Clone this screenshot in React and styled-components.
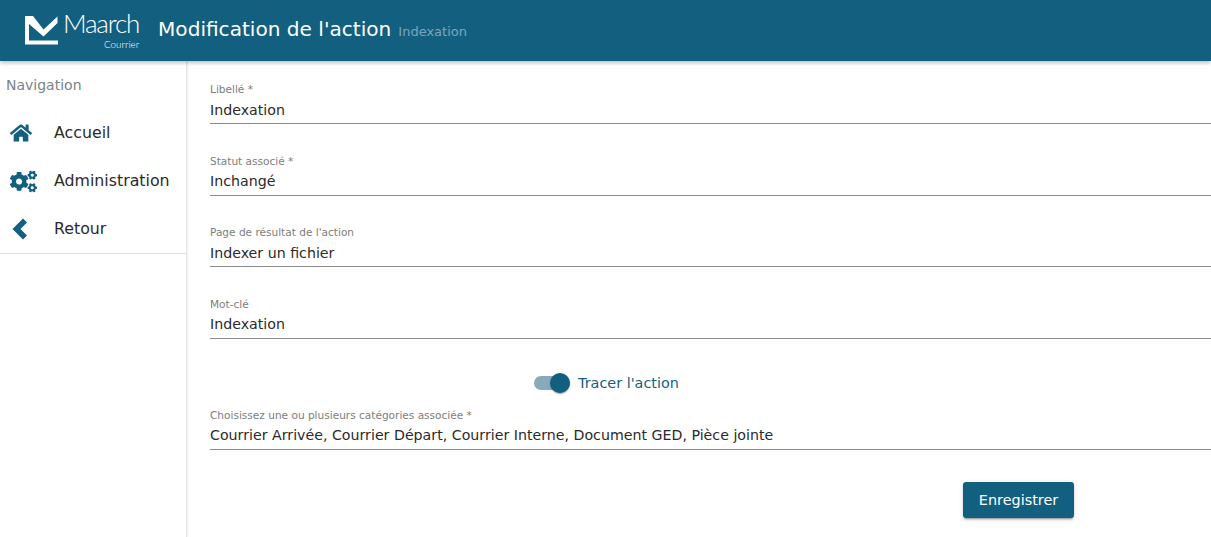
import styled, { createGlobalStyle } from "styled-components"
import { FaHome, FaCogs } from "react-icons/fa"

const Global = createGlobalStyle`
  html, body {
    margin: 0;
    padding: 0;
    height: 100%;
    overflow: hidden;
    background: #fff;
    font-family: "DejaVu Sans", sans-serif;
  }
`
const Page = styled.div`
  width: 1211px;
  height: 537px;
  display: flex;
  flex-direction: column;
  overflow: hidden;
`
const Header = styled.header`
  height: 61px;
  flex: none;
  background: #135f7f;
  display: flex;
  align-items: center;
  padding-left: 24px;
  position: relative;
  z-index: 2;
  box-shadow: 0 2px 4px rgba(0, 0, 0, 0.25);
`
const Logo = styled.div`
  width: 116px;
  height: 40px;
  display: flex;
  flex: none;
`
const LogoWords = styled.div`
  display: flex;
  flex-direction: column;
  align-items: flex-end;
  margin-left: 1px;
  color: #fff;
  font-family: Lato, sans-serif;
  font-weight: 300;
`
const LogoName = styled.span`
  font-size: 26px;
  line-height: 26px;
  letter-spacing: -1.2px;
  margin-top: -1px;
`
const LogoSub = styled.span`
  font-size: 9.8px;
  line-height: 12px;
  margin-top: 2px;
`
const Title = styled.h1`
  margin: -4px 0 0 18px;
  font-size: 20.1px;
  font-weight: 400;
  color: #fff;
  white-space: nowrap;
`
const Sub = styled.small`
  font-size: 13px;
  margin-left: 7px;
  color: rgba(255, 255, 255, 0.45);
`
const Body = styled.div`
  flex: 1;
  display: flex;
  min-height: 0;
`
const Side = styled.nav`
  width: 186px;
  flex: none;
  border-right: 1px solid #e4e4e4;
  box-shadow: 1px 0 2px rgba(0, 0, 0, 0.06);
`
const NavTitle = styled.div`
  height: 48px;
  padding: 16px 0 0 6px;
  box-sizing: border-box;
  font-size: 14px;
  line-height: 16px;
  color: #7b8389;
`
const NavList = styled.div`
  border-bottom: 1px solid #e0e0e0;
`
const NavItem = styled.a`
  height: 48px;
  display: flex;
  align-items: center;
  padding-left: 10px;
  font-size: 15.8px;
  color: #2a2a2a;
`
const NavIcon = styled.span`
  width: 44px;
  flex: none;
  display: flex;
  align-items: center;
  color: #135f7f;
  font-size: ${(p) => p.$size}px;
`
const NavLabel = styled.span`
  margin-top: -2px;
`
const Main = styled.main`
  flex: 1;
  min-width: 0;
  padding: 21px 0 0 23px;
`
const Field = styled.div`
  height: ${(p) => p.$height || 71.5}px;
  box-sizing: border-box;
`
const Label = styled.div`
  font-size: 10.55px;
  line-height: 14px;
  color: #7d7d7d;
`
const Value = styled.div`
  font-size: 14.2px;
  line-height: 20px;
  margin-top: ${(p) => (p.$tight ? 3 : 3.8)}px;
  padding-bottom: ${(p) => (p.$tight ? 4.4 : 3.6)}px;
  color: #2a2a2a;
  border-bottom: 1px solid #8c8c8c;
  white-space: nowrap;
`
const ToggleRow = styled.div`
  height: 34px;
  margin: -2px 0 8px;
  display: flex;
  align-items: center;
  padding-left: 324px;
`
const Track = styled.span`
  width: 36px;
  height: 14px;
  border-radius: 7px;
  background: #89aabb;
  position: relative;
  flex: none;
`
const Knob = styled.span`
  position: absolute;
  right: 0;
  top: -3px;
  width: 20px;
  height: 20px;
  border-radius: 50%;
  background: #135f7f;
  box-shadow: 0 2px 1px -1px rgba(0, 0, 0, 0.2), 0 1px 1px rgba(0, 0, 0, 0.14),
    0 1px 3px rgba(0, 0, 0, 0.12);
`
const ToggleText = styled.span`
  margin-left: 8px;
  font-size: 14.4px;
  color: #135f7f;
`
const Actions = styled.div`
  display: flex;
  padding: 30px 0 0 753px;
`
const Save = styled.button`
  width: 111px;
  height: 36px;
  border: 0;
  border-radius: 3px;
  background: #135f7f;
  color: #fff;
  font-family: inherit;
  font-size: 14.4px;
  box-shadow: 0 3px 1px -2px rgba(0, 0, 0, 0.2), 0 2px 2px rgba(0, 0, 0, 0.14),
    0 1px 5px rgba(0, 0, 0, 0.12);
`

const fields = [
  ["Libellé *", "Indexation"],
  ["Statut associé *", "Inchangé"],
  ["Page de résultat de l'action", "Indexer un fichier"],
  ["Mot-clé", "Indexation"],
]

const App = () => {
  return (
    <Page>
      <Global />
      <Header>
        <Logo>
          <svg width="38" height="32" viewBox="0 0 38 32" style={{ marginTop: 4 }}>
            <path d="M1 1h8l10.500 13.500L33.500 1.500v6.500L19.500 21.500 5 9v16.500h29v4H1z" fill="#fff" />
          </svg>
          <LogoWords>
            <LogoName>Maarch</LogoName>
            <LogoSub>Courrier</LogoSub>
          </LogoWords>
        </Logo>
        <Title>
          Modification de l'action<Sub>Indexation</Sub>
        </Title>
      </Header>
      <Body>
        <Side>
          <NavTitle>Navigation</NavTitle>
          <NavList>
            <NavItem>
              <NavIcon $size={22}><FaHome /></NavIcon>
              <NavLabel>Accueil</NavLabel>
            </NavItem>
            <NavItem>
              <NavIcon $size={27}><FaCogs /></NavIcon>
              <NavLabel>Administration</NavLabel>
            </NavItem>
            <NavItem>
              <NavIcon $size={20}>
                <svg width="20" height="24" viewBox="0 0 20 24">
                  <path d="M13 1.500l4 4-6.500 6.500 6.500 6.500-4 4L2.500 12z" fill="currentColor" />
                </svg>
              </NavIcon>
              <NavLabel>Retour</NavLabel>
            </NavItem>
          </NavList>
        </Side>
        <Main>
          {fields.map(([label, value]) => (
            <Field key={label}>
              <Label>{label}</Label>
              <Value>{value}</Value>
            </Field>
          ))}
          <ToggleRow>
            <Track><Knob /></Track>
            <ToggleText>Tracer l'action</ToggleText>
          </ToggleRow>
          <Field $height={44}>
            <Label>Choisissez une ou plusieurs catégories associée *</Label>
            <Value $tight>Courrier Arrivée, Courrier Départ, Courrier Interne, Document GED, Pièce jointe</Value>
          </Field>
          <Actions>
            <Save>Enregistrer</Save>
          </Actions>
        </Main>
      </Body>
    </Page>
  )
}

export default App
